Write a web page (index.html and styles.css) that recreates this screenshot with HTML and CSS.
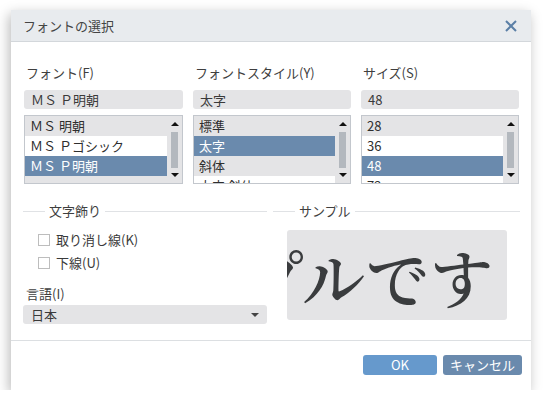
FILE: index.html
```html
<!DOCTYPE html>
<html lang="ja">
<head>
<meta charset="utf-8">
<title>フォントの選択</title>
<link rel="stylesheet" href="styles.css">
</head>
<body>
<div class="dialog">
  <div class="titlebar">
    <span class="title">フォントの選択</span>
    <svg class="close" width="12" height="12" viewBox="0 0 12 12"><path d="M1 1L11 11M11 1L1 11" stroke="#5b7fa6" stroke-width="2" fill="none"/></svg>
  </div>
  <div class="main">
    <div class="pickers">
      <div class="picker">
        <div class="label">フォント(F)</div>
        <div class="input">ＭＳ Ｐ明朝</div>
        <div class="list">
          <div class="rows">
            <div class="row">ＭＳ 明朝</div>
            <div class="row even">ＭＳ Ｐゴシック</div>
            <div class="row sel">ＭＳ Ｐ明朝</div>
          </div>
          <div class="scroll"><span class="up"></span><span class="thumb"></span><span class="down"></span></div>
        </div>
      </div>
      <div class="picker">
        <div class="label">フォントスタイル(Y)</div>
        <div class="input">太字</div>
        <div class="list">
          <div class="rows">
            <div class="row">標準</div>
            <div class="row sel">太字</div>
            <div class="row">斜体</div>
            <div class="row even">太字 斜体</div>
          </div>
          <div class="scroll"><span class="up"></span><span class="thumb"></span><span class="down"></span></div>
        </div>
      </div>
      <div class="picker">
        <div class="label">サイズ(S)</div>
        <div class="input">48</div>
        <div class="list">
          <div class="rows">
            <div class="row">28</div>
            <div class="row even">36</div>
            <div class="row sel">48</div>
            <div class="row even">72</div>
          </div>
          <div class="scroll"><span class="up"></span><span class="thumb"></span><span class="down"></span></div>
        </div>
      </div>
    </div>
    <div class="lower">
      <div class="left">
        <div class="group-head"><span class="lead"></span><span class="legend">文字飾り</span><span class="rest"></span></div>
        <div class="check"><span class="box"></span><span class="check-text">取り消し線(K)</span></div>
        <div class="check"><span class="box"></span><span class="check-text">下線(U)</span></div>
        <div class="label lang">言語(I)</div>
        <div class="select"><span>日本</span><span class="caret"></span></div>
      </div>
      <div class="right">
        <div class="group-head"><span class="lead"></span><span class="legend">サンプル</span><span class="rest"></span></div>
        <div class="sample"><span class="sample-text">プルです</span></div>
      </div>
    </div>
  </div>
  <div class="footer">
    <button class="btn ok">OK</button>
    <button class="btn cancel">キャンセル</button>
  </div>
</div>
</body>
</html>
```
FILE: styles.css
```css
* { box-sizing: border-box; }
body {
  margin: 0;
  background: #fff;
  font-family: "Noto Sans CJK JP", "Noto Sans", sans-serif;
  font-size: 13px;
  color: #3a3a3a;
}
.dialog {
  margin: 10px 0 0 11px;
  width: 520px;
  height: 380px;
  background: #fff;
  box-shadow: -2px 4px 12px rgba(0,0,0,0.28);
  display: flex;
  flex-direction: column;
}
.titlebar {
  height: 32px;
  background: #e8ebee;
  border-bottom: 1px solid #d3d7db;
  display: flex;
  align-items: center;
  justify-content: space-between;
  padding: 0 14px 0 12px;
}
.title { font-size: 13px; color: #444; line-height: 18px; }
.close { display: block; }
.main {
  height: 299px;
  border-bottom: 1px solid #dcdfe2;
}
.pickers {
  display: grid;
  grid-template-columns: 159px 158px 158px;
  column-gap: 10px;
  padding: 22px 12px 0 13px;
}
.label { line-height: 18px; height: 18px; padding-left: 2px; color: #3f3f3f; }
.input {
  margin-top: 8px;
  height: 19px;
  line-height: 19px;
  background: #e4e4e6;
  border-radius: 3px;
  padding-left: 7px;
  color: #3a3a3a;
}
.list {
  margin-top: 6px;
  height: 69px;
  border: 1px solid #c3c7cd;
  background: #e4e4e6;
  display: flex;
  overflow: hidden;
}
.rows { flex: 1; overflow: hidden; }
.row {
  height: 20px;
  line-height: 20px;
  padding-left: 5px;
  white-space: nowrap;
  color: #2e2e2e;
}
.row.even { background: #fff; }
.row.sel { background: #6a8aad; color: #fff; }
.scroll {
  width: 15px;
  display: flex;
  flex-direction: column;
  align-items: center;
}
.up, .down {
  width: 0; height: 0;
  border-left: 4px solid transparent;
  border-right: 4px solid transparent;
}
.up { border-bottom: 4px solid #111; margin-top: 6px; }
.thumb { width: 7px; height: 36px; background: #b3b8be; margin-top: 6px; }
.down { border-top: 4px solid #111; margin-top: 5px; }
.lower {
  display: flex;
  margin-top: 18px;
  padding-left: 12px;
}
.left { width: 244px; }
.right { width: 247px; margin-left: 6px; }
.group-head {
  display: flex;
  align-items: center;
  height: 18px;
}
.lead { width: 22px; height: 1px; background: #e0e2e5; }
.legend { padding: 0 4px; line-height: 18px; color: #3f3f3f; }
.rest { flex: 1; height: 1px; background: #e0e2e5; }
.check {
  display: flex;
  align-items: center;
  height: 23px;
  padding-left: 15px;
  color: #3a3a3a;
}
.check-text { line-height: 18px; }
.left .group-head { margin-bottom: 8px; }
.box {
  width: 12px; height: 12px;
  border: 1px solid #bdbdbd;
  background: #fff;
  margin-right: 6px;
  flex-shrink: 0;
}
.lang { margin-top: 11px; padding-left: 3px; }
.select {
  margin-top: 2px;
  height: 19px;
  background: #e4e4e6;
  border-radius: 3px;
  padding: 0 8px 0 8px;
  display: flex;
  align-items: center;
  justify-content: space-between;
}
.caret {
  width: 0; height: 0;
  border-left: 4px solid transparent;
  border-right: 4px solid transparent;
  border-top: 4px solid #444;
}
.sample {
  margin: 10px 0 0 14px;
  width: 220px;
  height: 90px;
  background: #e4e4e6;
  border-radius: 3px;
  overflow: hidden;
  display: flex;
  justify-content: flex-end;
  align-items: center;
  padding-right: 13px;
}
.sample-text {
  font-family: "Noto Serif CJK JP", "Noto Sans CJK JP", serif;
  font-size: 63px;
  font-weight: 600;
  letter-spacing: 1px;
  white-space: nowrap;
  color: #3a3c3e;
  line-height: 1;
  flex-shrink: 0;
}
.footer {
  flex: 1;
  display: flex;
  justify-content: flex-end;
  align-items: flex-start;
  padding: 14px 9px 0 0;
  gap: 6px;
}
.btn {
  height: 20px;
  border: none;
  border-radius: 3px;
  color: #fff;
  font-family: "Noto Sans CJK JP", "Noto Sans", sans-serif;
  font-size: 13px;
  line-height: 20px;
  padding: 0;
}
.ok { width: 74px; background: #6699cc; }
.cancel { width: 79px; background: #6a8aad; }
```
